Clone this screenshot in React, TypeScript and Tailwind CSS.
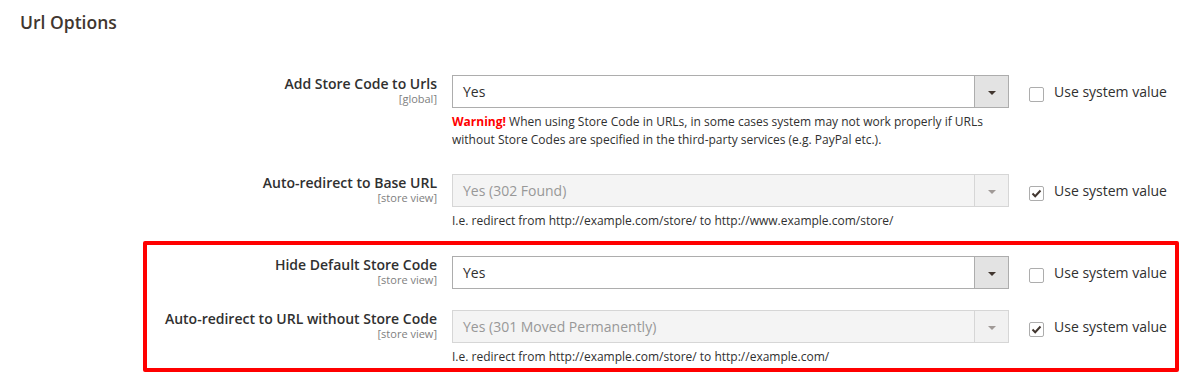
import React from 'react';

type FieldProps = {
  label: string;
  scope: string;
  value: string;
  disabled?: boolean;
  useSystem: boolean;
  note?: React.ReactNode;
};

// Select box in Magento admin style
function SelectBox({ value, disabled }: { value: string; disabled?: boolean }) {
  return (
    <div
      className={
        disabled
          ? 'flex h-[33px] w-full border border-[#d6d6d6] bg-[#f4f4f4]'
          : 'flex h-[33px] w-full border border-[#adadad] bg-white'
      }
    >
      <div
        className={
          disabled
            ? 'flex-1 pl-[10px] text-[14px] leading-[31px] text-[#989898]'
            : 'flex-1 pl-[10px] text-[14px] leading-[31px] text-[#303030]'
        }
      >
        {value}
      </div>
      <div
        className={
          disabled
            ? 'flex w-[34px] items-center justify-center border-l border-[#d6d6d6] bg-[#f1f1f1]'
            : 'flex w-[34px] items-center justify-center border-l border-[#adadad] bg-[#e3e3e3]'
        }
      >
        <svg width="8" height="4" viewBox="0 0 8 4" className="mt-[2px]">
          <polygon points="0,0 8,0 4,4" fill={disabled ? '#a09a97' : '#41362f'} />
        </svg>
      </div>
    </div>
  );
}

function Checkbox({ checked }: { checked: boolean }) {
  return (
    <div className="mt-[12px] flex h-[15px] w-[15px] shrink-0 items-center justify-center self-start rounded-[2px] border border-[#adadad] bg-white">
      {checked && (
        <svg width="11" height="9" viewBox="0 0 11 9">
          <polyline
            points="1.5,4.5 4.2,7.2 9.5,1.5"
            fill="none"
            stroke="#41362f"
            strokeWidth="2"
          />
        </svg>
      )}
    </div>
  );
}

function Field({ label, scope, value, disabled, useSystem, note }: FieldProps) {
  return (
    <div className="flex items-start">
      <div className="flex-1 text-right">
        <div className="text-[14px] font-semibold leading-[18px] text-[#303030]">{label}</div>
        <div className="text-[11px] leading-[12px] text-[#808080]">{scope}</div>
      </div>
      <div className="ml-[15px] w-[557px]">
        <SelectBox value={value} disabled={disabled} />
        {note && (
          <div className="mt-[5px] text-[12px] leading-[18px] text-[#303030]">{note}</div>
        )}
      </div>
      <div className="ml-[20px] flex h-[33px] w-[146px] items-center gap-[10px]">
        <Checkbox checked={useSystem} />
        <span className="text-[14px] leading-[33px] text-[#303030]">Use system value</span>
      </div>
    </div>
  );
}

export default function App() {
  return (
    <div
      className="h-[392px] w-[1197px] overflow-hidden bg-white pr-[22px]"
      style={{ fontFamily: '"Open Sans", "Liberation Sans", sans-serif' }}
    >
      <h2 className="pl-[20px] pt-[10px] text-[17.5px] font-semibold leading-[24px] text-[#41362f]">
        Url Options
      </h2>

      <div className="mt-[41px]">
        <Field
          label="Add Store Code to Urls"
          scope="[global]"
          value="Yes"
          useSystem={false}
          note={
            <span>
              <strong className="font-bold text-[#ff0000]">Warning!</strong>
              <span> When using Store Code in URLs, in some cases system may not work properly if
              URLs without Store Codes are specified in the third-party services (e.g. PayPal
              etc.).</span>
            </span>
          }
        />
      </div>

      <div className="mt-[25px]">
        <Field
          label="Auto-redirect to Base URL"
          scope="[store view]"
          value="Yes (302 Found)"
          disabled
          useSystem
          note="I.e. redirect from http://example.com/store/ to http://www.example.com/store/"
        />
      </div>

      {/* highlighted block */}
      <div className="-mr-[4px] ml-[143px] mt-[11px] rounded-[2px] border-4 border-[#ff0000] pb-[2px] pt-[11px]">
        <Field
          label="Hide Default Store Code"
          scope="[store view]"
          value="Yes"
          useSystem={false}
        />
        <div className="mt-[21px]">
          <Field
            label="Auto-redirect to URL without Store Code"
            scope="[store view]"
            value="Yes (301 Moved Permanently)"
            disabled
            useSystem
            note="I.e. redirect from http://example.com/store/ to http://example.com/"
          />
        </div>
      </div>
    </div>
  );
}
